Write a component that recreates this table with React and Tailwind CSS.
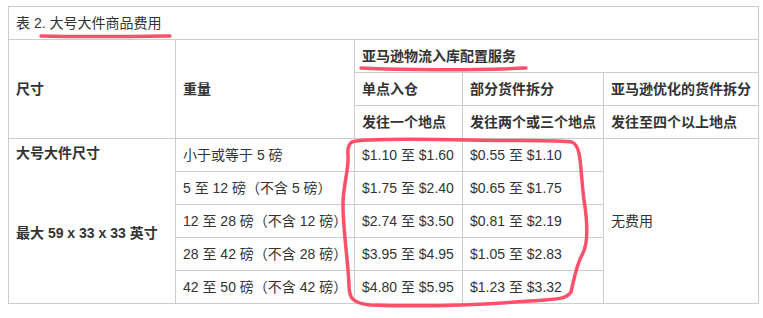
import React from "react";

const rows = [
  ["小于或等于 5 磅", "$1.10 至 $1.60", "$0.55 至 $1.10"],
  ["5 至 12 磅（不含 5 磅）", "$1.75 至 $2.40", "$0.65 至 $1.75"],
  ["12 至 28 磅（不含 12 磅）", "$2.74 至 $3.50", "$0.81 至 $2.19"],
  ["28 至 42 磅（不含 28 磅）", "$3.95 至 $4.95", "$1.05 至 $2.83"],
  ["42 至 50 磅（不含 42 磅）", "$4.80 至 $5.95", "$1.23 至 $3.32"],
];

const cell = "border border-[#cccccc] px-[7px] h-[33px] align-middle text-left";

export default function App() {
  return (
    <div className="relative w-[763px] h-[318px] bg-white pl-[8px] pt-[6px] text-[14px] leading-[20px] text-[#333333] font-['Liberation_Sans','Noto_Sans_CJK_SC',sans-serif]">
      <table className="table-fixed border-collapse w-[750px]">
        <colgroup>
          <col className="w-[167px]" />
          <col className="w-[179px]" />
          <col className="w-[108px]" />
          <col className="w-[141px]" />
          <col className="w-[155px]" />
        </colgroup>
        <tbody>
          <tr>
            <td colSpan={5} className={cell}>表 2. 大号大件商品费用</td>
          </tr>
          <tr>
            <th rowSpan={3} className={`${cell} font-bold`}>尺寸</th>
            <th rowSpan={3} className={`${cell} font-bold`}>重量</th>
            <th colSpan={3} className={`${cell} font-bold`}>亚马逊物流入库配置服务</th>
          </tr>
          <tr>
            <th className={`${cell} font-bold whitespace-nowrap`}>单点入仓</th>
            <th className={`${cell} font-bold whitespace-nowrap`}>部分货件拆分</th>
            <th className={`${cell} font-bold whitespace-nowrap`}>亚马逊优化的货件拆分</th>
          </tr>
          <tr>
            <th className={`${cell} font-bold whitespace-nowrap`}>发往一个地点</th>
            <th className={`${cell} font-bold whitespace-nowrap`}>发往两个或三个地点</th>
            <th className={`${cell} font-bold whitespace-nowrap`}>发往至四个以上地点</th>
          </tr>
          {rows.map((r, i) => (
            <tr key={i}>
              {i === 0 && (
                <td rowSpan={5} className="border border-[#cccccc] px-[7px] align-top pt-[4px] font-bold">
                  <div className="flex flex-col gap-[60px]">
                    <span>大号大件尺寸</span>
                    <span className="whitespace-nowrap">最大 59 x 33 x 33 英寸</span>
                  </div>
                </td>
              )}
              <td className={`${cell} whitespace-nowrap`}>{r[0]}</td>
              <td className={`${cell} whitespace-nowrap`}>{r[1]}</td>
              <td className={`${cell} whitespace-nowrap`}>{r[2]}</td>
              {i === 0 && (
                <td rowSpan={5} className="border border-[#cccccc] px-[7px] align-middle">无费用</td>
              )}
            </tr>
          ))}
        </tbody>
      </table>

      <svg className="absolute inset-0 pointer-events-none" width="763" height="318" viewBox="0 0 763 318" fill="none">
        <path d="M41 36 C 80 37, 130 36.5, 170 36" stroke="#ff506b" strokeWidth="3.5" strokeLinecap="round" />
        <path d="M361 68 C 400 70, 470 70.5, 526 68" stroke="#ff506b" strokeWidth="3.5" strokeLinecap="round" />
        <path
          d="M352 142 C 360 139, 420 139, 470 140 C 520 141, 560 140, 572 142 C 582 146, 580 170, 584 200 C 588 225, 588 245, 582 255 C 576 266, 574 280, 571 292 C 566 300, 555 299, 530 301 C 480 305, 420 307, 370 305 C 352 303, 349 298, 349 285 C 348 260, 343 230, 343 205 C 343 185, 349 170, 348 155 C 347 147, 350 143, 352 142"
          stroke="#ff506b"
          strokeWidth="3.5"
          strokeLinecap="round"
          strokeLinejoin="round"
        />
      </svg>
    </div>
  );
}
